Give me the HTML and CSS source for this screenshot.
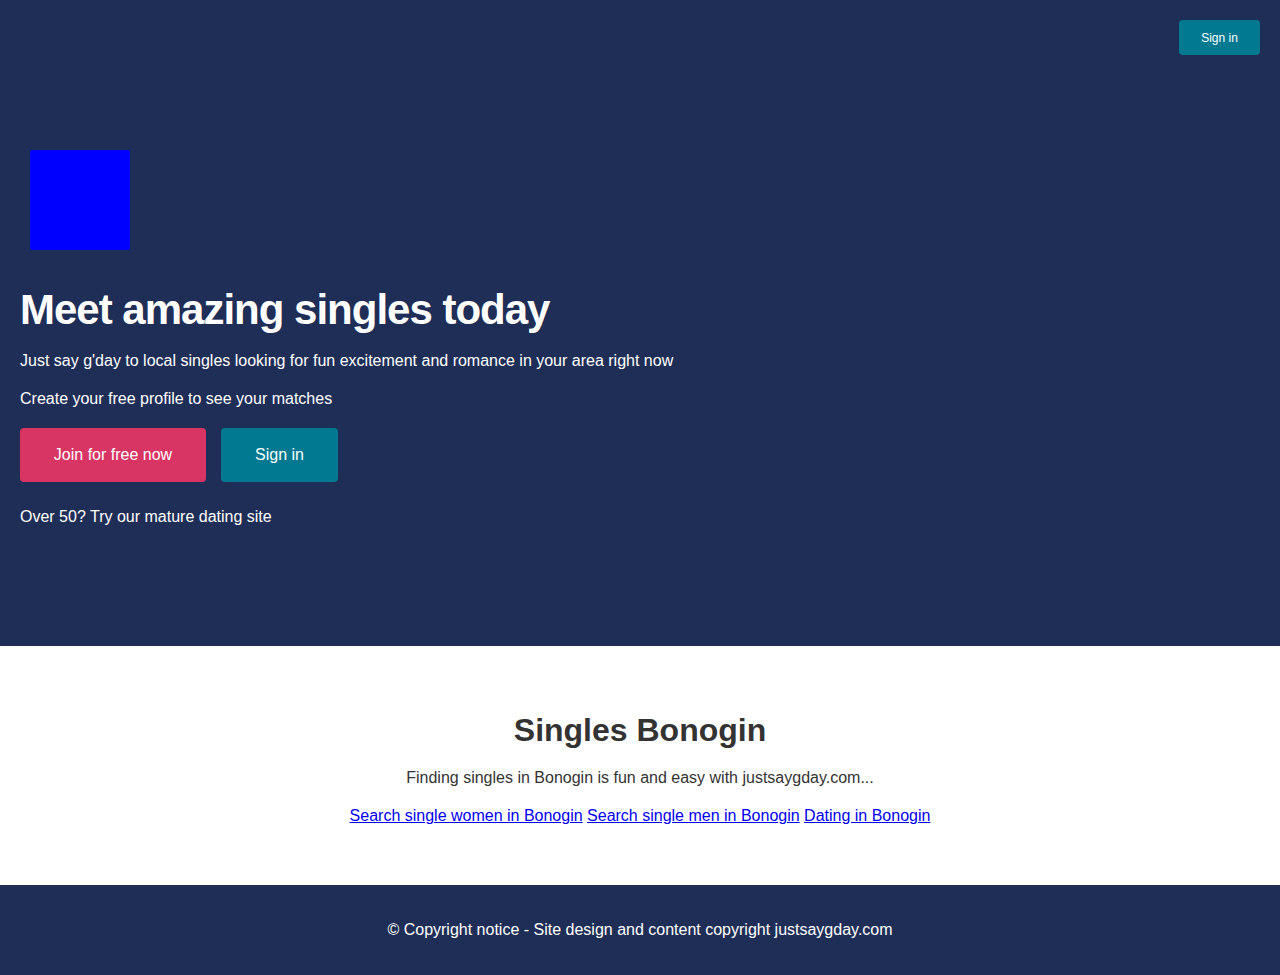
FILE: index.html
```html
<!DOCTYPE html>
<html>
<head>
<meta charset="utf-8">
<link rel="stylesheet" href="styles.css">
</head>
<body>
<header class="hero">
  <div class="topbar">
    <a class="btn btn-small" href="#">Sign in</a>
  </div>
  <div class="hero-content">
    <div class="logo"></div>
    <h1 class="hero-title">Meet amazing singles today</h1>
    <p class="hero-text">Just say g'day to local singles looking for fun excitement and romance in your area right now</p>
    <p class="hero-text">Create your free profile to see your matches</p>
    <div class="actions">
      <a class="btn btn-join" href="#">Join for free now</a>
      <a class="btn btn-sign" href="#">Sign in</a>
    </div>
    <p class="hero-text">Over 50? Try our mature dating site</p>
  </div>
</header>
<section class="info">
  <h2 class="info-title">Singles Bonogin</h2>
  <p class="info-text">Finding singles in Bonogin is fun and easy with justsaygday.com...</p>
  <p class="info-links"><a href="#">Search single women in Bonogin</a> <a href="#">Search single men in Bonogin</a> <a href="#">Dating in Bonogin</a></p>
</section>
<footer class="footer">
  <p>© Copyright notice - Site design and content copyright justsaygday.com</p>
</footer>
</body>
</html>
```
FILE: styles.css
```css
* { box-sizing: border-box; }
body {
  margin: 0;
  font-family: "Liberation Sans", Arial, sans-serif;
  font-size: 16px;
  color: #333;
}
.hero {
  background: #1f2e56;
  color: #fff;
  height: 646px;
  padding: 20px;
}
.topbar {
  display: flex;
  justify-content: flex-end;
}
.btn {
  display: inline-flex;
  align-items: center;
  justify-content: center;
  color: #fff;
  text-decoration: none;
  border-radius: 4px;
}
.btn-small {
  background: #007991;
  font-size: 12px;
  height: 35px;
  width: 81px;
}
.hero-content {
  padding-top: 95px;
}
.logo {
  width: 100px;
  height: 100px;
  margin-left: 10px;
  background: #0000ff;
}
.hero-title {
  font-size: 42px;
  letter-spacing: -1px;
  font-weight: bold;
  margin: 35px 0 0;
  line-height: 50px;
}
.hero-text {
  margin: 16px 0 0;
  line-height: 20px;
}
.hero-text + .hero-text { margin-top: 18px; }
.actions {
  display: flex;
  gap: 15px;
  margin-top: 19px;
  margin-bottom: 25px;
}
.btn-join {
  background: #d83565;
  width: 186px;
  height: 54px;
}
.btn-sign {
  background: #007991;
  width: 117px;
  height: 54px;
}
.info {
  text-align: center;
  padding: 64px 20px 58px;
}
.info-title {
  font-size: 32px;
  margin: 0;
  line-height: 40px;
  color: #333;
}
.info-text {
  margin: 17px 0 0;
  line-height: 22px;
}
.info-links {
  margin: 16px 0 0;
  line-height: 22px;
}
.info-links a { color: #0000ee; }
.footer {
  background: #1f2e56;
  color: #fff;
  text-align: center;
  height: 90px;
  display: flex;
  align-items: center;
  justify-content: center;
}
.footer p { margin: 0; }
```
